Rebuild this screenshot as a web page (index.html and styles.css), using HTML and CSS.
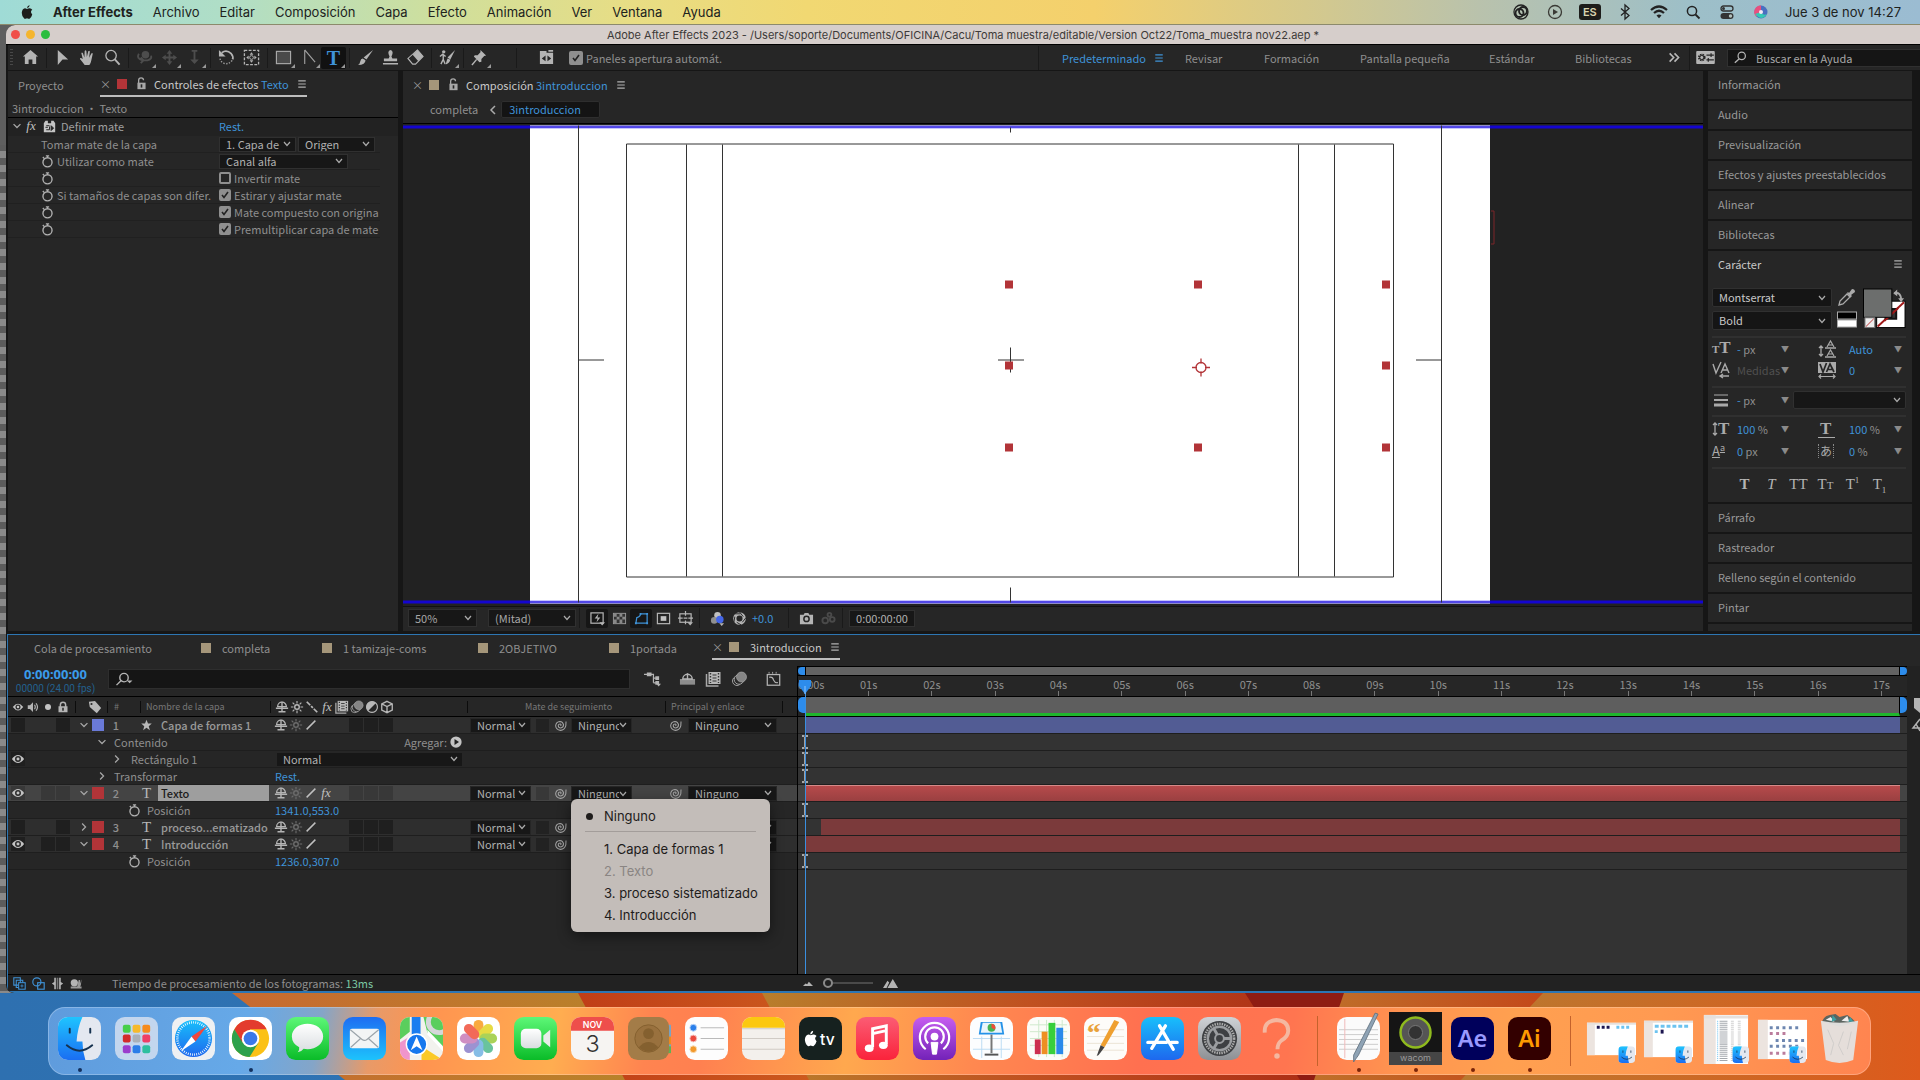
FILE: index.html
```html
<!DOCTYPE html>
<html lang="es">
<head>
<meta charset="utf-8">
<title>Adobe After Effects 2023</title>
<link rel="stylesheet" href="styles.css">
</head>
<body>
<svg class="defs" aria-hidden="true">
  <defs>
    <symbol id="eye" viewBox="0 0 16 16"><path d="M1 8q7-9 14 0q-7 9-14 0z" fill="#c4c4c4"/><circle cx="8" cy="8" r="3.4" fill="#2a2a2a"/><circle cx="8" cy="8" r="1.7" fill="#c4c4c4"/></symbol>
    <symbol id="audio" viewBox="0 0 16 16"><path d="M1 5.500h3l4-4v13l-4-4h-3z" fill="#b4b4b4"/><path d="M10 5q2 3 0 6M12 3q4 5 0 10" fill="none" stroke="#b4b4b4" stroke-width="1.600"/></symbol>
    <symbol id="lock" viewBox="0 0 16 16"><path d="M4.500 8v-3a3.500 3.500 0 0 1 7 0v3" fill="none" stroke="#b4b4b4" stroke-width="2"/><rect x="2" y="7" width="12" height="8" fill="#b4b4b4"/><rect x="7" y="9" width="2" height="4" fill="#262626"/></symbol>
    <symbol id="unlock" viewBox="0 0 16 16"><path d="M4.500 8v-4a3 3 0 0 1 6 0" fill="none" stroke="#a8a8a8" stroke-width="1.600"/><rect x="3" y="7" width="10" height="8" fill="#a8a8a8"/><rect x="7" y="9" width="2" height="4" fill="#262626"/></symbol>
    <symbol id="tag" viewBox="0 0 16 16"><path d="M1 2l7-1l7 8l-5 6l-8-7z" fill="#b8b8b8"/><circle cx="4" cy="4.500" r="1.200" fill="#262626"/></symbol>
    <symbol id="shy" viewBox="0 0 16 16"><path d="M3 7.500a5 5 0 0 1 10 0z" fill="none" stroke="#b4b4b4" stroke-width="1.500"/><path d="M8 2v12M1 9.500h14M4 13.500h8" stroke="#b4b4b4" stroke-width="1.600"/></symbol>
    <symbol id="sun" viewBox="0 0 16 16"><circle cx="8" cy="8" r="2.600" fill="none" stroke="currentColor" stroke-width="1.600"/><path d="M8 1v3M8 12v3M1 8h3M12 8h3M3 3l2 2M11 11l2 2M13 3l-2 2M5 11l-2 2" stroke="currentColor" stroke-width="1.300"/></symbol>
    <symbol id="slash" viewBox="0 0 16 16"><path d="M3 13l10-10" stroke="#c0c0c0" stroke-width="1.700"/></symbol>
    <symbol id="backslash" viewBox="0 0 16 16"><path d="M2 2l4 4M7 7l2 2M10 10l4 4" stroke="#b8b8b8" stroke-width="2"/></symbol>
    <symbol id="film" viewBox="0 0 16 16"><path d="M1 3v12h12" fill="none" stroke="#a8a8a8" stroke-width="1.500"/><rect x="3" y="1" width="12" height="12" fill="#b8b8b8"/><path d="M5 2v10M13 2v10" stroke="#333" stroke-dasharray="1.500 1.500" stroke-width="1.400"/><path d="M7 4h4M7 7h4M7 10h4" stroke="#333"/></symbol>
    <symbol id="blur" viewBox="0 0 16 16"><circle cx="5.500" cy="10" r="4.500" fill="none" stroke="#a0a0a0"/><circle cx="7.500" cy="8.500" r="4.800" fill="#2a2a2a" stroke="#a0a0a0"/><circle cx="10" cy="6" r="5" fill="#858585" stroke="#b0b0b0" stroke-width=".600"/></symbol>
    <symbol id="half" viewBox="0 0 16 16"><circle cx="8" cy="8" r="6.500" fill="#b8b8b8"/><path d="M12.600 3.400a6.500 6.500 0 0 1-9.200 9.200z" fill="#262626"/><circle cx="8" cy="8" r="6.200" fill="none" stroke="#b8b8b8" stroke-width="1.300"/></symbol>
    <symbol id="cube" viewBox="0 0 16 16"><path d="M8 1.500l6 3v7l-6 3l-6-3v-7zM2 4.500l6 3l6-3M8 7.500v7" fill="none" stroke="#b8b8b8" stroke-width="1.500"/></symbol>
    <symbol id="watch" viewBox="0 0 16 16"><circle cx="8" cy="9" r="5.600" fill="none" stroke="#b0b0b0" stroke-width="1.700"/><path d="M6 1h4M8 1v2.500M2.200 2.500l2 2" stroke="#b0b0b0" stroke-width="1.600"/></symbol>
    <symbol id="down" viewBox="0 0 16 16"><path d="M2.500 5l5.500 5.500l5.500-5.500" fill="none" stroke="#a8a8a8" stroke-width="2"/></symbol>
    <symbol id="right" viewBox="0 0 16 16"><path d="M5 2.500l5.500 5.500l-5.500 5.500" fill="none" stroke="#a8a8a8" stroke-width="2"/></symbol>
    <symbol id="whip" viewBox="0 0 16 16"><path d="M8 8.500q1.500-1.500 0-2.200q-2.600-.3-2.800 2q.3 2.800 3.200 2.700q3.400-.6 3.300-4q-.8-3.700-4.400-4q-4.600.4-5.300 5.300q.5 5 6 5.700q5-.3 6.500-5.500l.3-5.500" fill="none" stroke="#a4a4a4" stroke-width="1.300"/></symbol>
    <symbol id="ham" viewBox="0 0 16 16"><path d="M2 3h12M2 8h12M2 13h12" stroke="currentColor" stroke-width="1.800"/></symbol>
    <symbol id="glass" viewBox="0 0 16 16"><circle cx="9.500" cy="6" r="4.500" fill="none" stroke="currentColor" stroke-width="1.500"/><path d="M6.500 9.500l-5.500 5" stroke="currentColor" stroke-width="1.700"/></symbol>
    <symbol id="star" viewBox="0 0 16 16"><path d="M8 1l2 5h5l-4 3.500l1.500 5.500l-4.500-3.200l-4.500 3.200l1.500-5.500l-4-3.500h5z" fill="#b8b8b8"/></symbol>
    <symbol id="beam" viewBox="0 0 10 16"><path d="M2 2h2.500M8 2h-2.500M5 3v10M2 14h2.500M8 14h-2.500" stroke="#d0d0d0" stroke-width="1.400" fill="none"/></symbol>
    <symbol id="finder" viewBox="0 0 44 44"><rect width="44" height="44" rx="10" fill="#e4e8f0"/><path d="M10 0h15q-5 11-6 25h6q0 9 3 19h-18a10 10 0 0 1-10-10v-24a10 10 0 0 1 10-10z" fill="url(#gFind)"/><path d="M12 12v4M33 12v4" stroke="#16324f" stroke-width="2" stroke-linecap="round"/><path d="M9 29q13 11 26 0" fill="none" stroke="#16324f" stroke-width="2" stroke-linecap="round"/></symbol>
    <linearGradient id="gFind" x1="0" y1="0" x2="0" y2="1"><stop offset="0" stop-color="#1fc4ff"/><stop offset="1" stop-color="#1a6ef2"/></linearGradient>
    <linearGradient id="gGreen" x1="0" y1="0" x2="0" y2="1"><stop offset="0" stop-color="#5df777"/><stop offset="1" stop-color="#0abc28"/></linearGradient>
    <linearGradient id="gBlue" x1="0" y1="0" x2="0" y2="1"><stop offset="0" stop-color="#1e6df2"/><stop offset="1" stop-color="#1dc3fc"/></linearGradient>
    <linearGradient id="gStore" x1="0" y1="0" x2="0" y2="1"><stop offset="0" stop-color="#18bffb"/><stop offset="1" stop-color="#1e68ee"/></linearGradient>
    <linearGradient id="gMusic" x1="0" y1="0" x2="0" y2="1"><stop offset="0" stop-color="#fb5c74"/><stop offset="1" stop-color="#fa233b"/></linearGradient>
    <linearGradient id="gPod" x1="0" y1="0" x2="0" y2="1"><stop offset="0" stop-color="#c65df0"/><stop offset="1" stop-color="#7322b8"/></linearGradient>
    <linearGradient id="gGrey" x1="0" y1="0" x2="0" y2="1"><stop offset="0" stop-color="#cfd2d6"/><stop offset="1" stop-color="#8d9094"/></linearGradient>
    <linearGradient id="gWhite" x1="0" y1="0" x2="0" y2="1"><stop offset="0" stop-color="#ffffff"/><stop offset="1" stop-color="#d9dde0"/></linearGradient>
  </defs>
</svg>

<header class="menubar">
  <nav class="menus" aria-label="Menú">
    <button class="apple" aria-label="Apple"><svg viewBox="0 0 16 16"><path d="M11 0q0 3-3 3.800q0-3 3-3.800zM8 4.600q1.200-.8 3-.8q2 .2 3 1.700q-3 2.300 0 5.300q-.8 3-3 5q-1.300.2-3-.7q-1.700.9-3 .7q-3-2.600-3-7q.5-4.500 3.700-5q1 0 2.300.8z" fill="#1d1d1b"/></svg></button>
    <button class="strong">After Effects</button><button>Archivo</button><button>Editar</button><button>Composición</button><button>Capa</button><button>Efecto</button><button>Animación</button><button>Ver</button><button>Ventana</button><button>Ayuda</button>
  </nav>
  <div class="status">
    <svg viewBox="0 0 20 16"><circle cx="10" cy="8" r="7" fill="none" stroke="#222" stroke-width="1.300"/><circle cx="8.500" cy="9" r="4" fill="none" stroke="#222" stroke-width="1.800"/><circle cx="12" cy="7" r="4" fill="none" stroke="#222" stroke-width="1.800"/></svg>
    <svg viewBox="0 0 20 16"><circle cx="10" cy="8" r="6.500" fill="none" stroke="#3a3a35" stroke-width="1.300"/><path d="M8 5l5 3l-5 3z" fill="#3a3a35"/></svg>
    <span class="lang">ES</span>
    <svg viewBox="0 0 20 16"><path d="M6 4.500l8 7l-4 3.500v-14l4 3.500l-8 7" fill="none" stroke="#222" stroke-width="1.300"/></svg>
    <svg viewBox="0 0 20 16"><path d="M2 6q8-7 16 0M5 9q5-4.500 10 0" fill="none" stroke="#222" stroke-width="2.200"/><path d="M7.500 11.500q2.500-2 5 0l-2.500 2.800z" fill="#222"/></svg>
    <svg viewBox="0 0 20 16"><circle cx="9" cy="7" r="4.600" fill="none" stroke="#222" stroke-width="1.500"/><path d="M12.500 10.500l4 4" stroke="#222" stroke-width="1.800"/></svg>
    <svg viewBox="0 0 20 16"><rect x="4" y="2" width="12" height="5" rx="2.500" fill="none" stroke="#333" stroke-width="1.300"/><circle cx="6.500" cy="4.500" r="1.500" fill="#333"/><rect x="3.500" y="9" width="13" height="6" rx="3" fill="#333"/><circle cx="13.500" cy="12" r="1.700" fill="#b3c1bd"/></svg>
    <svg viewBox="0 0 20 16"><circle cx="10" cy="8" r="6.500" fill="#4a6fc0"/><path d="M10 1.500a6.500 6.500 0 0 0-5 11q5-2 5-5z" fill="#e8507f"/><path d="M4 10q7 8 12 0q-4 2-6-2z" fill="#34c8b4"/><circle cx="10" cy="8" r="2" fill="#f3e9f5"/></svg>
    <time class="clock">Jue 3 de nov 14:27</time>
  </div>
</header>

<main class="stage">
<div class="window">
  <div class="titlebar">
    <div class="lights"><i class="red"></i><i class="amber"></i><i class="green"></i></div>
    <h1>Adobe After Effects 2023 - /Users/soporte/Documents/OFICINA/Cacu/Toma muestra/editable/Version Oct22/Toma_muestra nov22.aep *</h1>
  </div>

  <div class="toolbar">
    <i class="grip"></i>
    <button class="tool" aria-label="Inicio"><svg viewBox="0 0 18 18"><path d="M9 1l8 7h-2v8h-4v-5h-4v5h-4v-8h-2z" fill="#b4b4b4"/></svg></button>
    <i class="sep"></i>
    <button class="tool" aria-label="Selección"><svg viewBox="0 0 18 18"><path d="M4 1l11 10h-6l-5 6z" fill="#b4b4b4"/></svg></button>
    <button class="tool" aria-label="Mano"><svg viewBox="0 0 18 18"><path d="M6 17q-2-3-5-6.500q0-2 3 0l-1.500-6q.5-1.500 1.700 0l1.500 4.500l.3-7q1-1.500 1.800 0l.5 6.500l1.500-6q1-1.300 1.700.2l-.8 6.500l2.300-4.500q1.500-1 1.500.5l-1.500 7q-.5 3-2 4.800z" fill="#b4b4b4"/></svg></button>
    <button class="tool" aria-label="Zoom"><svg viewBox="0 0 18 18"><circle cx="7.500" cy="7" r="5.500" fill="none" stroke="#b4b4b4" stroke-width="1.400"/><path d="M11.500 11l5 5.500" stroke="#b4b4b4" stroke-width="2"/></svg></button>
    <i class="sep"></i>
    <button class="tool more dim" aria-label="Órbita"><svg viewBox="0 0 18 18"><circle cx="10" cy="6" r="4" fill="#4d4d4d"/><path d="M3 5q-3 5 4 7h5q5-1 4-5M5 9l3 3l-3 3" fill="none" stroke="#4d4d4d" stroke-width="2"/></svg></button>
    <button class="tool more dim" aria-label="Desplazar"><svg viewBox="0 0 18 18"><path d="M9 1l3 4h-6zM9 17l3-4h-6zM1 9l4-3v6zM17 9l-4-3v6z" fill="#4d4d4d"/><path d="M9 4v10M4 9h10" stroke="#4d4d4d" stroke-width="2"/></svg></button>
    <button class="tool more dim" aria-label="Dolly"><svg viewBox="0 0 18 18"><path d="M6 2h6M9 2v12" stroke="#4d4d4d" stroke-width="2"/><path d="M4.500 11h9l-4.500 5z" fill="#4d4d4d"/></svg></button>
    <i class="sep"></i>
    <button class="tool" aria-label="Rotación"><svg viewBox="0 0 18 18"><path d="M4 4q5-4 10 1q2.500 3 1.500 6" fill="none" stroke="#b4b4b4" stroke-width="1.900"/><path d="M15 12q-4 5-9 3q-4-2-4-6" fill="none" stroke="#999" stroke-width="1.500" stroke-dasharray="1.500 1.500"/><path d="M1 1v7h7z" fill="#b4b4b4"/></svg></button>
    <button class="tool" aria-label="Panorámica trasera"><svg viewBox="0 0 18 18"><rect x="1.500" y="1.500" width="15" height="15" fill="none" stroke="#b4b4b4" stroke-width="1.400" stroke-dasharray="3 1.500"/><path d="M9 3.500l2 2.500h-4zM9 14.500l2-2.500h-4zM3.500 9l2.500-2v4zM14.500 9l-2.500-2v4z" fill="#b4b4b4"/><circle cx="9" cy="9" r="2" fill="none" stroke="#b4b4b4"/></svg></button>
    <i class="sep"></i>
    <button class="tool more" aria-label="Rectángulo"><svg viewBox="0 0 18 18"><rect x="1.500" y="2.500" width="15" height="13" fill="#4a4a4a" stroke="#aaa" stroke-width="1.200"/></svg></button>
    <button class="tool more" aria-label="Pluma"><svg viewBox="0 0 18 18"><path d="M5 1v15M5 1l11 13" stroke="#a0a0a0" fill="none" stroke-width="1.200"/></svg></button>
    <button class="tool more on" aria-label="Texto">T</button>
    <i class="sep"></i>
    <button class="tool" aria-label="Pincel"><svg viewBox="0 0 18 18"><path d="M17 1l-7 10l-3-2z" fill="#b4b4b4"/><path d="M6 10l3 2q0 5-8 5q2-1 2.500-4q.5-3 2.500-3z" fill="#b4b4b4"/></svg></button>
    <button class="tool" aria-label="Tampón"><svg viewBox="0 0 18 18"><path d="M8 8q-3-6 1-7q4 1 1 7l1 2h5v3h-14v-3h5z" fill="#b4b4b4"/><path d="M1 15.500h16" stroke="#b4b4b4" stroke-width="1.600"/></svg></button>
    <button class="tool" aria-label="Borrador"><svg viewBox="0 0 18 18"><path d="M11 1l6 7l-8 8h-3l-5-6z" fill="none" stroke="#b4b4b4" stroke-width="1.200"/><path d="M11 1l6 7l-5 5l-6-7z" fill="#b4b4b4"/></svg></button>
    <i class="sep"></i>
    <button class="tool more" aria-label="Rotoscopio"><svg viewBox="0 0 18 18"><circle cx="5" cy="3" r="1.800" fill="#b4b4b4"/><path d="M1 8l3-2.500l3 2.500M4.500 6v5l-2.500 5M4.500 11l2 5" stroke="#b4b4b4" stroke-width="1.500" fill="none"/><path d="M17 1l-5 10l-3-2zM9 10l3 1.500q-1 4-5 5q1-4 2-6.500z" fill="#b4b4b4"/></svg></button>
    <i class="sep"></i>
    <button class="tool more" aria-label="Posición libre"><svg viewBox="0 0 18 18"><path d="M10 1l6 6l-2 .500l-3 3l0 3l-2 .500l-6-6l1-1.500l3 0l3-3z" fill="#b4b4b4"/><path d="M6 11l-5 6" stroke="#b4b4b4" stroke-width="1.500"/></svg></button>
    <i class="sep wide"></i>
    <button class="tool" aria-label="Paneles"><svg viewBox="0 0 18 18"><path d="M2 2h7v2h7v12h-14z" fill="#b4b4b4"/><path d="M11 1h5v2h-5z" fill="#b4b4b4"/><path d="M8 7v6l-4-3zM10 7v6l4-3z" fill="#262626"/></svg></button>
    <label class="auto"><input type="checkbox" class="tick big" checked>Paneles apertura automát.</label>
    <nav class="spaces" aria-label="Espacios de trabajo">
      <button class="w1">Predeterminado <svg><use href="#ham"/></svg></button><button class="w2">Revisar</button><button class="w3">Formación</button><button class="w4">Pantalla pequeña</button><button class="w5">Estándar</button><button class="w6">Bibliotecas</button><button class="chev" aria-label="Más"><svg viewBox="0 0 16 16"><path d="M2 3l5 5l-5 5M8 3l5 5l-5 5" fill="none" stroke="#b8b8b8" stroke-width="2"/></svg></button>
    </nav>
    <button class="sync" aria-label="Ajustes"><svg viewBox="0 0 20 14"><rect width="20" height="14" rx="1" fill="#b4b4b4"/><circle cx="6" cy="7" r="3" fill="none" stroke="#262626" stroke-width="2.200" stroke-dasharray="1.600 .800"/><circle cx="6" cy="7" r="2.200" fill="none" stroke="#262626"/><path d="M11 4.500h8M11 9.500h8M16 2.500v4M13 7.500v4" stroke="#262626" stroke-width="1.300"/></svg></button>
    <label class="help"><svg><use href="#glass"/></svg><input type="search" aria-label="Buscar en la Ayuda" placeholder="Buscar en la Ayuda"></label>
  </div>

  <div class="upper">
    <section class="panel effects">
      <div class="tabs">
        <button class="tab project">Proyecto</button>
        <div class="tab active"><b class="x">×</b><i class="chip r"></i><svg class="s12 lockgap"><use href="#unlock"/></svg><span>Controles de efectos <em>Texto</em></span><svg class="s10 hamgap"><use href="#ham"/></svg></div>
      </div>
      <p class="source">3introduccion · Texto</p>
      <div class="fxhead"><svg class="s10"><use href="#down"/></svg><em class="fx">fx</em><svg class="s12" viewBox="0 0 16 16"><path d="M1 4l2-3h3v3h4v-3h3l2 3v11h-14z" fill="#c4c4c4"/><path d="M4 7h4M4 12h4M8 8v4M3 9h3M10 7l3 3l-3 3z" stroke="#262626" stroke-width="1.200" fill="#262626"/></svg><span class="name">Definir mate</span><a href="#">Rest.</a></div>
      <div class="param"><i></i><label class="lab flush" for="p1">Tomar mate de la capa</label><select id="p1" class="dd w77"><option>1. Capa de formas 1</option></select><select class="dd w77" aria-label="Origen"><option>Origen</option></select></div>
      <div class="param"><svg class="s12"><use href="#watch"/></svg><label class="lab" for="p2">Utilizar como mate</label><select id="p2" class="dd w129"><option>Canal alfa</option></select></div>
      <div class="param"><svg class="s12"><use href="#watch"/></svg><span class="lab"></span><label class="ck"><input type="checkbox" class="tick">Invertir mate</label></div>
      <div class="param"><svg class="s12"><use href="#watch"/></svg><span class="lab">Si tamaños de capas son difer.</span><label class="ck"><input type="checkbox" class="tick" checked>Estirar y ajustar mate</label></div>
      <div class="param"><svg class="s12"><use href="#watch"/></svg><span class="lab"></span><label class="ck"><input type="checkbox" class="tick" checked>Mate compuesto con origina</label></div>
      <div class="param"><svg class="s12"><use href="#watch"/></svg><span class="lab"></span><label class="ck"><input type="checkbox" class="tick" checked>Premultiplicar capa de mate</label></div>
    </section>

    <section class="panel comp">
      <div class="tabs">
        <div class="tab plain"><b class="x">×</b><i class="chip t"></i><svg class="s12 lockgap"><use href="#unlock"/></svg><span>Composición <em>3introduccion</em></span><svg class="s10 hamgap"><use href="#ham"/></svg></div>
      </div>
      <div class="crumbs"><button>completa</button><svg viewBox="0 0 8 10"><path d="M6 1l-4 4l4 4" fill="none" stroke="#aaa" stroke-width="1.500"/></svg><button class="cur">3introduccion</button></div>
      <div class="viewer">
        <svg class="canvas" viewBox="403 124 1300 481" preserveAspectRatio="xMidYMid meet">
          <rect x="530" y="125" width="960" height="478" fill="#fff"/>
          <path d="M0 126.500h530M1490 126.500h2000M0 601.500h530M1490 601.500h2000" stroke="#1405cf" stroke-width="3"/>
          <path d="M530 126.500h960M530 601.500h960" stroke="#8f8aff" stroke-width="3"/>
          <path d="M530 126.500h960M530 601.500h960" stroke="#1405cf" stroke-width="1"/>
          <path d="M578.500 125v477M1441.500 125v477M626.500 143.500h767v433h-767zM686.500 144v432M722.500 144v432M1298.500 144v432M1334.500 144v432M1010.500 127v5M1010.500 587v15M1010.500 347v25M998 359.500h26M579 359.500h25M1416 359.500h25" fill="none" stroke="#333"/>
          <path d="M1005 280h8v8h-8zM1194 280h8v8h-8zM1382 280h8v8h-8zM1005 361h8v8h-8zM1382 361h8v8h-8zM1005 443h8v8h-8zM1194 443h8v8h-8zM1382 443h8v8h-8z" fill="#b23438"/>
          <circle cx="1201" cy="367" r="5" fill="none" stroke="#b23438" stroke-width="1.300"/><path d="M1201 358v5M1201 371v5M1192 367h5M1205 367h5" stroke="#b23438" stroke-width="1.300"/>
          <path d="M1491 210.500h3v33h-3" fill="none" stroke="#7d2528"/>
        </svg>
      </div>
      <div class="viewbar">
        <select class="dd w69" aria-label="Aumento"><option>50%</option></select>
        <select class="dd w88" aria-label="Resolución"><option>(Mitad)</option></select>
        <i class="sep"></i>
        <button class="vb on" aria-label="Vista rápida"><svg viewBox="0 0 16 16"><rect x="1" y="2" width="13" height="11" fill="none" stroke="#b4b4b4" stroke-width="1.300"/><path d="M9 3l-4 5h3l-1 4l4-5h-3z" fill="#b4b4b4"/><path d="M10 12h6l-3 3.500z" fill="#b4b4b4"/></svg></button>
        <button class="vb" aria-label="Transparencia"><svg viewBox="0 0 16 16"><rect x="1.500" y="2.500" width="13" height="11" fill="#333" stroke="#999"/><path d="M2 3h3v3h-3zM8 3h3v3h-3zM5 6h3v3h-3zM11 6h3v3h-3zM2 9h3v4h-3zM8 9h3v4h-3z" fill="#888"/></svg></button>
        <button class="vb on" aria-label="Máscara"><svg viewBox="0 0 16 16"><path d="M2 13l1-6q4-1 4-4h7v10z" fill="none" stroke="#3f93d8" stroke-width="1.300"/><path d="M1 12h2v2h-2zM13 2h2v2h-2zM13 12h2v2h-2zM6 2h2v2h-2z" fill="#3f93d8"/></svg></button>
        <button class="vb" aria-label="Región"><svg viewBox="0 0 16 16"><rect x="1.500" y="2.500" width="13" height="11" fill="none" stroke="#b4b4b4" stroke-width="1.300"/><rect x="5" y="5.500" width="6" height="5" fill="#c4c4c4"/></svg></button>
        <button class="vb" aria-label="Guías"><svg viewBox="0 0 16 16"><rect x="2" y="3" width="12" height="9" fill="none" stroke="#b4b4b4" stroke-width="1.300"/><path d="M8 0v5M8 10v4M0 7.500h5M11 7.500h5M6 7.500h4" stroke="#b4b4b4" stroke-width="1.300"/><path d="M10 12h6l-3 3.500z" fill="#b4b4b4"/></svg></button>
        <i class="sep"></i>
        <button class="vb" aria-label="Canales"><svg viewBox="0 0 16 16"><circle cx="8" cy="4.500" r="3.500" fill="#c0c0c0"/><circle cx="4.500" cy="10" r="3.500" fill="#909090"/><circle cx="10.500" cy="9" r="4" fill="#4466e8"/><path d="M10 13h5l-2.500 3z" fill="#b4b4b4"/></svg></button>
        <button class="vb" aria-label="Exposición"><svg viewBox="0 0 16 16"><circle cx="8" cy="8" r="5" fill="none" stroke="#b4b4b4" stroke-width="3.500"/><path d="M8 1l4 5M15 7l-4 5M10 15l-5-3M2 12l1-6M3 3l6 0" stroke="#262626"/></svg></button>
        <a class="expo" href="#">+0.0</a>
        <i class="sep"></i>
        <button class="vb" aria-label="Instantánea"><svg viewBox="0 0 16 16"><path d="M1 4h4l1-2h4l1 2h4v10h-14z" fill="#b4b4b4"/><circle cx="8" cy="8.500" r="2.800" fill="#b4b4b4" stroke="#262626" stroke-width="1.600"/></svg></button>
        <button class="vb" aria-label="Mostrar instantánea"><svg viewBox="0 0 16 16"><circle cx="4.500" cy="10" r="3" fill="none" stroke="#4a4a4a" stroke-width="2"/><circle cx="9" cy="4" r="2" fill="none" stroke="#4a4a4a" stroke-width="2"/><circle cx="12" cy="9" r="2.500" fill="none" stroke="#4a4a4a" stroke-width="2"/></svg></button>
        <i class="sep"></i>
        <button class="time">0:00:00:00</button>
      </div>
    </section>

    <aside class="side">
      <button class="acc">Información</button><button class="acc">Audio</button><button class="acc">Previsualización</button><button class="acc">Efectos y ajustes preestablecidos</button><button class="acc">Alinear</button><button class="acc">Bibliotecas</button>
      <section class="char">
        <h2>Carácter<svg class="s10"><use href="#ham"/></svg></h2>
        <div class="fonts">
          <div class="families"><select class="dd split" aria-label="Familia"><option>Montserrat</option></select><select class="dd split" aria-label="Estilo"><option>Bold</option></select></div>
          <svg class="pipette" viewBox="0 0 20 44"><path d="M2 17l1-4l7-7l3 3l-7 7z" fill="none" stroke="#aaa" stroke-width="1.300"/><path d="M10 5l1-1l1 1l3-4q3 0 3 3l-4 3l1 1l-1.500 1.500z" fill="#aaa"/><rect x=".500" y="24" width="19" height="7" fill="#000" stroke="#aaa"/><rect x=".500" y="32" width="19" height="7" fill="#fff" stroke="#aaa"/></svg>
          <svg class="swatches" viewBox="0 0 44 42"><rect x="14" y="13" width="29" height="27" fill="#fff" stroke="#000"/><path d="M15 39l27-25" stroke="#a01818" stroke-width="2"/><rect x="23" y="21" width="11" height="10" fill="#333" stroke="#111" stroke-width="2"/><path d="M22 33l14-13" stroke="#a01818" stroke-width="2"/><rect x=".500" y=".500" width="29" height="29" fill="#6c6e6d" stroke="#000"/><rect x="2" y="30" width="10" height="10" fill="#eee" stroke="#777"/><path d="M3 39l8-8" stroke="#b33"/><path d="M32 5q7-2 7 7" fill="none" stroke="#aaa" stroke-width="2"/><path d="M31 5l4-4v7zM36 10h6l-3 4z" fill="#aaa"/></svg>
        </div>
        <div class="grid g2 first">
          <span class="ic ttt"><small>T</small>T</span><span><em>-</em> px</span><b>▼</b><svg class="c5" viewBox="0 0 18 18"><path d="M3 6v10M1 8l2-2l2 2M1 14l2 2l2-2M7 8h11M7 17h11" fill="none" stroke="#aaa" stroke-width="1.300"/><path d="M9 7l3.500-6l3.500 6M10 5h5M9 16l3.500-6l3.500 6M10 14h5" fill="none" stroke="#aaa" stroke-width="1.200"/></svg><em class="c7">Auto</em><b>▼</b>
          <svg viewBox="0 0 18 18"><path d="M1 3l3 9l5-11M9 12l4-9l4 9M10 9h6M8 15h9M11 13l-3 2l3 2" fill="none" stroke="#aaa" stroke-width="1.400"/></svg><span class="off">Medidas</span><b>▼</b><svg class="c5" viewBox="0 0 18 18"><rect y="1" width="18" height="11" fill="#aaa"/><path d="M2 3l3 8l3.500-9M8.500 11l3.500-8l4 8M10 8.500h5" fill="none" stroke="#262626" stroke-width="1.700"/><path d="M1 15.500h16M3 13.500l-2 2l2 2M15 13.500l2 2l-2 2" fill="none" stroke="#aaa" stroke-width="1.200"/></svg><em class="c7">0</em><b>▼</b>
        </div>
        <div class="grid g1">
          <svg viewBox="0 0 18 18"><path d="M2 4h14" stroke="#aaa"/><path d="M2 9h14" stroke="#aaa" stroke-width="2"/><path d="M2 14h14" stroke="#aaa" stroke-width="3"/></svg><span><em>-</em> px</span><b>▼</b><select class="dd wide" aria-label="Trazo"><option></option></select>
        </div>
        <div class="grid g2">
          <span class="ic"><svg class="arr" viewBox="0 0 6 16"><path d="M3 2v12M1 4l2-2l2 2M1 12l2 2l2-2" fill="none" stroke="#aaa" stroke-width="1.300"/></svg>T</span><span><em>100</em> %</span><b>▼</b><span class="ic c5 under">T</span><span class="c7"><em>100</em> %</span><b>▼</b>
          <span class="ic base">A<sup>a</sup></span><span><em>0</em> px</span><b>▼</b><span class="ic c5 jp">あ</span><span class="c7"><em>0</em> %</span><b>▼</b>
        </div>
        <div class="styles"><button class="heavy">T</button><button class="ital">T</button><button>TT</button><button>T<small>T</small></button><button>T<sup>1</sup></button><button>T<sub>1</sub></button></div>
      </section>
      <button class="acc">Párrafo</button><button class="acc">Rastreador</button><button class="acc">Relleno según el contenido</button><button class="acc">Pintar</button><i class="rest"></i>
    </aside>
  </div>

  <section class="timeline">
    <div class="ttabs">
      <button class="q">Cola de procesamiento</button>
      <button class="k2"><i class="chip t"></i>completa</button>
      <button class="k3"><i class="chip t"></i>1 tamizaje-coms</button>
      <button class="k4"><i class="chip t"></i>2OBJETIVO</button>
      <button class="k5"><i class="chip t"></i>1portada</button>
      <div class="tab active k6"><b class="x">×</b><i class="chip t"></i><span>3introduccion</span><svg class="s10 hamgap"><use href="#ham"/></svg></div>
    </div>
    <div class="tbody">
      <div class="layers">
        <div class="thead">
          <div class="tc"><strong>0:00:00:00</strong><span>00000 (24.00 fps)</span></div>
          <label class="find"><svg viewBox="0 0 18 16"><circle cx="9" cy="6" r="4.500" fill="none" stroke="#b4b4b4" stroke-width="1.500"/><path d="M6 9l-5 5" stroke="#b4b4b4" stroke-width="1.500"/><path d="M12 9h6l-3 3z" fill="#b4b4b4"/></svg><input type="search" aria-label="Buscar"></label>
          <div class="tbtns">
            <button class="b1" aria-label="Minigráfico"><svg viewBox="0 0 18 16"><path d="M0 3h5M5 3h5v9M10 7h4M10 12h4" stroke="#b4b4b4" fill="none" stroke-width="1.300"/><path d="M3 1h5v4h-5zM12 5h4v4h-4zM12 10h4v4h-4zM13 13h5l-2.500 3z" fill="#b4b4b4"/></svg></button>
            <button class="b2" aria-label="Tímidas"><svg viewBox="0 0 18 16"><path d="M4 8a5 5 0 0 1 10 0z" fill="none" stroke="#b4b4b4" stroke-width="1.500"/><path d="M9 2v7M1 9h16" stroke="#b4b4b4" stroke-width="1.500"/><path d="M1 10h16v4h-16z" fill="#8c8c8c"/></svg></button>
            <button class="b3" aria-label="Fusión"><svg><use href="#film"/></svg></button>
            <button class="b4" aria-label="Desenfoque"><svg><use href="#blur"/></svg></button>
            <button class="b5" aria-label="Editor de gráficos"><svg viewBox="0 0 18 18"><rect x="2" y="4" width="14" height="12" fill="none" stroke="#b4b4b4" stroke-width="1.400"/><path d="M4 7q4-1 5 3q2 4 5 3" fill="none" stroke="#b4b4b4" stroke-width="1.300"/><path d="M4 1v2M8 1v2M12 1v2" stroke="#b4b4b4"/></svg></button>
          </div>
        </div>
        <div class="cols">
          <div class="av"><svg><use href="#eye"/></svg><svg><use href="#audio"/></svg><svg viewBox="0 0 16 16"><circle cx="8" cy="8" r="4" fill="#c4c4c4"/></svg><svg><use href="#lock"/></svg></div>
          <i class="bar"></i><svg class="tagc"><use href="#tag"/></svg><i class="bar"></i><span class="hash">#</span><i class="bar"></i><span class="hname">Nombre de la capa</span><i class="bar"></i>
          <div class="sws bright"><svg><use href="#shy"/></svg><svg><use href="#sun"/></svg><svg><use href="#backslash"/></svg><em class="fx">fx</em><svg><use href="#film"/></svg><svg><use href="#blur"/></svg><svg><use href="#half"/></svg><svg><use href="#cube"/></svg></div>
          <i class="bar far"></i><span class="hmate">Mate de seguimiento</span><i class="bar"></i><span class="hpar">Principal y enlace</span><i class="bar"></i>
        </div>

        <div class="row layer">
          <div class="av"><i></i><i class="no"></i><i class="no"></i><i></i></div><svg class="tw"><use href="#down"/></svg><i class="sw blue"></i><span class="num">1</span><svg class="ty"><use href="#star"/></svg><span class="name">Capa de formas 1</span>
          <div class="sws"><svg><use href="#shy"/></svg><svg><use href="#sun"/></svg><svg><use href="#slash"/></svg><i class="no"></i><i class="no"></i><i></i><i></i><i></i></div>
          <select class="dd mode" aria-label="Modo"><option>Normal</option></select><i class="pt"></i><svg class="wh"><use href="#whip"/></svg><select class="dd matte" aria-label="Mate"><option>Ninguno</option></select><svg class="wh2"><use href="#whip"/></svg><select class="dd parent" aria-label="Principal"><option>Ninguno</option></select>
        </div>
        <div class="row prop"><svg class="tw in1"><use href="#down"/></svg><span>Contenido</span><span class="agregar">Agregar: <svg viewBox="0 0 16 16"><circle cx="8" cy="8" r="7.500" fill="#c4c4c4"/><path d="M6 4l6 4l-6 4z" fill="#222"/></svg></span></div>
        <div class="row prop"><div class="av"><i><svg><use href="#eye"/></svg></i></div><svg class="tw in2"><use href="#right"/></svg><span class="rect">Rectángulo 1</span><select class="dd blend" aria-label="Modo del grupo"><option>Normal</option></select></div>
        <div class="row prop"><svg class="tw in1"><use href="#right"/></svg><span class="trans">Transformar</span><a href="#">Rest.</a></div>
        <div class="row layer sel">
          <div class="av"><i><svg><use href="#eye"/></svg></i><i class="no"></i><i></i><i></i></div><svg class="tw"><use href="#down"/></svg><i class="sw red"></i><span class="num">2</span><span class="ty">T</span><span class="name">Texto</span>
          <div class="sws"><svg><use href="#shy"/></svg><svg><use href="#sun"/></svg><svg><use href="#slash"/></svg><em class="fx">fx</em><i class="no"></i><i></i><i></i><i></i></div>
          <select class="dd mode" aria-label="Modo"><option>Normal</option></select><i class="pt"></i><svg class="wh"><use href="#whip"/></svg>
          <div class="anchor"><select class="dd matte" aria-label="Mate"><option>Ninguno</option></select>
            <ul class="popup" role="menu"><li role="menuitemradio" aria-checked="true" class="chosen">Ninguno</li><li role="separator" class="rule"></li><li role="menuitemradio">1. Capa de formas 1</li><li role="menuitemradio" class="off">2. Texto</li><li role="menuitemradio">3. proceso sistematizado</li><li role="menuitemradio">4. Introducción</li></ul>
          </div>
          <svg class="wh2"><use href="#whip"/></svg><select class="dd parent" aria-label="Principal"><option>Ninguno</option></select>
        </div>
        <div class="row prop"><svg class="tw pos"><use href="#watch"/></svg><span class="posn">Posición</span><a href="#">1341.0,553.0</a></div>
        <div class="row layer">
          <div class="av"><i></i><i class="no"></i><i class="no"></i><i></i></div><svg class="tw"><use href="#right"/></svg><i class="sw red"></i><span class="num">3</span><span class="ty">T</span><span class="name">proceso...ematizado</span>
          <div class="sws"><svg><use href="#shy"/></svg><svg><use href="#sun"/></svg><svg><use href="#slash"/></svg><i class="no"></i><i class="no"></i><i></i><i></i><i></i></div>
          <select class="dd mode" aria-label="Modo"><option>Normal</option></select><i class="pt"></i><svg class="wh"><use href="#whip"/></svg><select class="dd matte" aria-label="Mate"><option>Ninguno</option></select><svg class="wh2"><use href="#whip"/></svg><select class="dd parent" aria-label="Principal"><option>Ninguno</option></select>
        </div>
        <div class="row layer">
          <div class="av"><i><svg><use href="#eye"/></svg></i><i class="no"></i><i></i><i></i></div><svg class="tw"><use href="#down"/></svg><i class="sw red"></i><span class="num">4</span><span class="ty">T</span><span class="name">Introducción</span>
          <div class="sws"><svg><use href="#shy"/></svg><svg><use href="#sun"/></svg><svg><use href="#slash"/></svg><i class="no"></i><i class="no"></i><i></i><i></i><i></i></div>
          <select class="dd mode" aria-label="Modo"><option>Normal</option></select><i class="pt"></i><svg class="wh"><use href="#whip"/></svg><select class="dd matte" aria-label="Mate"><option>Ninguno</option></select><svg class="wh2"><use href="#whip"/></svg><select class="dd parent" aria-label="Principal"><option>Ninguno</option></select>
        </div>
        <div class="row prop"><svg class="tw pos"><use href="#watch"/></svg><span class="posn">Posición</span><a href="#">1236.0,307.0</a></div>
      </div>

      <div class="tracks">
        <div class="range nav"><i></i><b></b><i></i></div>
        <div class="ruler"><span class="zero">0:00s</span><span>01s</span><span>02s</span><span>03s</span><span>04s</span><span>05s</span><span>06s</span><span>07s</span><span>08s</span><span>09s</span><span>10s</span><span>11s</span><span>12s</span><span>13s</span><span>14s</span><span>15s</span><span>16s</span><span>17s</span></div>
        <div class="range work"><i></i><b></b><i></i></div>
        <div class="lanes">
          <div class="lane"><i class="clip blue"></i></div>
          <div class="lane"><svg><use href="#beam"/></svg></div>
          <div class="lane"><svg><use href="#beam"/></svg></div>
          <div class="lane"><svg><use href="#beam"/></svg></div>
          <div class="lane sel"><i class="clip hot"></i></div>
          <div class="lane"><svg><use href="#beam"/></svg></div>
          <div class="lane"><i class="clip late"></i></div>
          <div class="lane"><i class="clip"></i></div>
          <div class="lane"><svg><use href="#beam"/></svg></div>
        </div>
        <i class="needle"></i>
        <svg class="head" viewBox="0 0 12 14"><path d="M0 0h12v6l-6 8l-6-8z" fill="#2d8ceb"/><path d="M6 6v8" stroke="#8cc4ff"/></svg>
      </div>
      <svg class="marks" viewBox="0 0 8 36"><path d="M2 1h6v15l-6-5z" fill="#b4b4b4"/><path d="M8 22l-7 9h7M4 27l4 7" fill="none" stroke="#b4b4b4" stroke-width="1.500"/></svg>
    </div>
    <div class="foot">
      <div class="ficons">
        <svg viewBox="0 0 16 16"><path d="M1 1h8v9h-8zM4 4h8v9h-8z" fill="none" stroke="#3f93d8" stroke-width="1.300"/><rect x="7" y="7" width="8" height="8" fill="#1c1c1c" stroke="#3f93d8" stroke-width="1.300"/><path d="M11 9v4M9 11h4" stroke="#3f93d8"/></svg>
        <svg viewBox="0 0 16 16"><circle cx="6" cy="6" r="5" fill="none" stroke="#3f93d8" stroke-width="1.400"/><rect x="7" y="7" width="8" height="8" fill="none" stroke="#3f93d8" stroke-width="1.400"/></svg>
        <svg viewBox="0 0 16 16"><path d="M6 1v14h-2v-5l-3-2l3-2v-5zM10 1v14h2v-5l3-2l-3-2v-5z" fill="#b4b4b4"/><path d="M7 1h2v14h-2z" fill="#777"/></svg>
        <svg viewBox="0 0 18 16"><circle cx="6" cy="7" r="5" fill="#b4b4b4"/><path d="M1 12h15v3h-15zM12 3h2v9h-4zM16 2l-1 9h-2z" fill="#999"/></svg>
      </div>
      <span class="cost">Tiempo de procesamiento de los fotogramas: <b>13ms</b></span>
      <div class="zoomer"><svg viewBox="0 0 12 8"><path d="M0 7l3-3l2 1l2-3l5 5z" fill="#b4b4b4"/></svg><input type="range" min="0" max="100" value="0" aria-label="Zoom de tiempo"><svg class="mt" viewBox="0 0 18 10"><path d="M0 10l5-8l2 2l-3 6zM5 10l6-10l6 10z" fill="#b4b4b4"/></svg></div>
    </div>
  </section>
</div>
</main>

<footer class="desk">
  <svg class="wall" viewBox="0 0 1920 87" preserveAspectRatio="none">
    <defs>
      <linearGradient id="w1" x1="0" x2="1"><stop offset="0" stop-color="#2e70b0"/><stop offset="1" stop-color="#2f80c4"/></linearGradient>
      <linearGradient id="w2" x1="0" x2="1"><stop offset="0" stop-color="#c86a30"/><stop offset="1" stop-color="#b8822a"/></linearGradient>
      <linearGradient id="w3" x1="0" x2="1"><stop offset="0" stop-color="#c03e17"/><stop offset="1" stop-color="#cc5a1e"/></linearGradient>
      <linearGradient id="w4" x1="0" x2="1"><stop offset="0" stop-color="#b87e2c"/><stop offset=".500" stop-color="#c05020"/><stop offset="1" stop-color="#ad3016"/></linearGradient>
      <linearGradient id="w5" x1="0" x2="1"><stop offset="0" stop-color="#bf702a"/><stop offset="1" stop-color="#c4481a"/></linearGradient>
      <linearGradient id="w6" x1="0" x2="1"><stop offset="0" stop-color="#b87a30"/><stop offset="1" stop-color="#dd5a1c"/></linearGradient>
    </defs>
    <rect width="1920" height="87" fill="url(#w1)"/>
    <path d="M232 0h360l38 87h-285z" fill="url(#w2)"/>
    <path d="M578 0h190l45 87h-188z" fill="url(#w3)"/>
    <path d="M762 0h490l50 87h-493z" fill="url(#w4)"/>
    <path d="M1245 0h100l-30 87h-15z" fill="#8f1c12"/>
    <path d="M1344 0h200l-80 87h-150z" fill="url(#w5)"/>
    <path d="M1543 0h377v87h-459z" fill="url(#w6)"/>
  </svg>
  <nav class="dock" aria-label="Dock">
    <button class="app run" aria-label="Finder"><svg><use href="#finder"/></svg></button>
    <button class="app" aria-label="Launchpad"><svg viewBox="0 0 44 44"><rect width="44" height="44" rx="10" fill="#c3d6ee"/><g><rect x="8" y="8" width="8" height="8" rx="2" fill="#46cf4b"/><rect x="18" y="8" width="8" height="8" rx="2" fill="#f6b92c"/><rect x="28" y="8" width="8" height="8" rx="2" fill="#f58b1e"/><rect x="8" y="18" width="8" height="8" rx="2" fill="#d32b2b"/><rect x="18" y="18" width="8" height="8" rx="2" fill="#a9b0b8"/><rect x="28" y="18" width="8" height="8" rx="2" fill="#ef3e66"/><rect x="8" y="29" width="8" height="8" rx="2" fill="#9b3ccd"/><rect x="18" y="29" width="8" height="8" rx="2" fill="#2b7de8"/><rect x="28" y="29" width="8" height="8" rx="2" fill="#2dbf9f"/></g></svg></button>
    <button class="app" aria-label="Safari"><svg viewBox="0 0 44 44"><rect width="44" height="44" rx="10" fill="#eef0f2"/><circle cx="22" cy="22" r="19" fill="url(#gStore)"/><circle cx="22" cy="22" r="16.500" fill="none" stroke="#fff" stroke-width="2.500" stroke-dasharray=".8 1.400"/><path d="M36 9l-12 16l-4-5z" fill="#f0463c"/><path d="M9 35l11-15l4 5z" fill="#fff"/></svg></button>
    <button class="app run" aria-label="Chrome"><svg viewBox="0 0 44 44"><rect width="44" height="44" rx="10" fill="#fff"/><circle cx="22" cy="22" r="19" fill="#fbc116"/><path d="M5.500 12.500a19 19 0 0 1 33 0h-16.500l-9 14z" fill="#e33b2e"/><path d="M5.500 12.500a19 19 0 0 0 15.500 28.500l9-14.500l-8 4l-8.500-5z" fill="#2da14c"/><circle cx="22" cy="22" r="9" fill="#fff"/><circle cx="22" cy="22" r="7" fill="#3a78ea"/></svg></button>
    <button class="app" aria-label="Mensajes"><svg viewBox="0 0 44 44"><rect width="44" height="44" rx="10" fill="url(#gGreen)"/><path d="M22 7c9 0 16 5.500 16 13s-7 13-16 13q-2 0-4-.5q-2 3-6 3.500q2-2 1.500-5q-7.500-4-7.500-11c0-7.500 7-13 16-13z" fill="url(#gWhite)"/></svg></button>
    <button class="app" aria-label="Mail"><svg viewBox="0 0 44 44"><rect width="44" height="44" rx="10" fill="url(#gBlue)"/><rect x="7" y="12" width="30" height="20" rx="2" fill="#f2f4f5"/><path d="M7.500 13l12 10q2.500 2 5 0l12-10M8 31l10-9M36 31l-10-9" fill="none" stroke="#9aa3aa" stroke-width="1.200"/></svg></button>
    <button class="app" aria-label="Mapas"><svg viewBox="0 0 44 44"><defs><clipPath id="mc"><rect width="44" height="44" rx="10"/></clipPath></defs><g clip-path="url(#mc)"><rect width="44" height="44" fill="#f2f2ee"/><path d="M0 0h10v15l-10 8zM24 0h20v32l-16-16z" fill="#5ace5d"/><path d="M0 26l10-6v24h-10z" fill="#f095cc"/><path d="M22 30l22 14h-22z" fill="#fbc926"/><circle cx="40" cy="5" r="11" fill="none" stroke="#d5d7da" stroke-width="5"/><path d="M12 0h9v30h-9z" fill="#1a7df0"/><path d="M28 18l16 17v-5l-16-17z" fill="#fff"/><circle cx="17" cy="28" r="10.500" fill="#1678ee" stroke="#fff" stroke-width="1.500"/><path d="M17 20l6 14l-6-4l-6 4z" fill="#fff"/></g></svg></button>
    <button class="app" aria-label="Fotos"><svg viewBox="0 0 44 44"><rect width="44" height="44" rx="10" fill="#fff"/><g opacity=".85"><rect x="17" y="3" width="10" height="18" rx="5" fill="#f89c1e"/><rect x="17" y="3" width="10" height="18" rx="5" fill="#e3d523" transform="rotate(45 22 22)"/><rect x="17" y="3" width="10" height="18" rx="5" fill="#9ccb3b" transform="rotate(90 22 22)"/><rect x="17" y="3" width="10" height="18" rx="5" fill="#4fb98c" transform="rotate(135 22 22)"/><rect x="17" y="3" width="10" height="18" rx="5" fill="#71b2e2" transform="rotate(180 22 22)"/><rect x="17" y="3" width="10" height="18" rx="5" fill="#8b7fc9" transform="rotate(225 22 22)"/><rect x="17" y="3" width="10" height="18" rx="5" fill="#c77bb8" transform="rotate(270 22 22)"/><rect x="17" y="3" width="10" height="18" rx="5" fill="#f0513c" transform="rotate(315 22 22)"/></g></svg></button>
    <button class="app" aria-label="FaceTime"><svg viewBox="0 0 44 44"><rect width="44" height="44" rx="10" fill="url(#gGreen)"/><rect x="7" y="12" width="21" height="20" rx="5" fill="url(#gWhite)"/><path d="M30 19l7-6v18l-7-6z" fill="#e8ece9"/></svg></button>
    <button class="app" aria-label="Calendario"><svg viewBox="0 0 44 44"><rect width="44" height="44" rx="10" fill="#f6f4f2"/><path d="M0 14v-4a10 10 0 0 1 10-10h24a10 10 0 0 1 10 10v4z" fill="#ee4e4b"/><text x="22" y="11" class="tNov">NOV</text><text x="22" y="36" class="tDay">3</text></svg></button>
    <button class="app" aria-label="Contactos"><svg viewBox="0 0 44 44"><path d="M38 8h6v28h-6z" fill="#7aa3c4"/><path d="M38 20h6v8h-6z" fill="#f08c1c"/><path d="M38 30h6v7h-6z" fill="#62b150"/><rect width="42" height="44" rx="10" fill="#a37c48"/><circle cx="21" cy="22" r="14" fill="#99713e" stroke="#84602f"/><circle cx="21" cy="17" r="5.500" fill="#84602f"/><path d="M11 31q10-11 20 0q-10 9-20 0z" fill="#84602f"/></svg></button>
    <button class="app" aria-label="Recordatorios"><svg viewBox="0 0 44 44"><rect width="44" height="44" rx="10" fill="#fdfdfd"/><circle cx="8.500" cy="11" r="3.500" fill="#2a7fea" stroke="#bcd6f7"/><circle cx="8.500" cy="22" r="3.500" fill="#ea4a3e" stroke="#f7c4bf"/><circle cx="8.500" cy="33" r="3.500" fill="#f2992b" stroke="#f9dcb6"/><path d="M16 11h24M16 22h24M16 33h24" stroke="#b8b8b8"/></svg></button>
    <button class="app" aria-label="Notas"><svg viewBox="0 0 44 44"><rect width="44" height="44" rx="10" fill="#f3f0ec"/><path d="M0 11v-1a10 10 0 0 1 10-10h24a10 10 0 0 1 10 10v1z" fill="#fbc80f"/><path d="M0 12h44M0 22h44M0 33h44" stroke="#cfcac4"/></svg></button>
    <button class="app" aria-label="TV"><svg viewBox="0 0 44 44"><rect width="44" height="44" rx="10" fill="#16211f"/><g transform="translate(5 14)"><path d="M9.500 0q0 3-3 3.800q0-3 3-3.800zM7 4.600q1.200-.8 3-.8q2 .2 3 1.700q-3 2.300 0 5.300q-.8 3-3 5q-1.300.2-3-.7q-1.700.9-3 .7q-3-2.600-3-7q.5-4.500 3.700-5q1 0 2.300.8z" fill="#fff"/></g><text x="29" y="29" class="tTv">tv</text></svg></button>
    <button class="app" aria-label="Música"><svg viewBox="0 0 44 44"><rect width="44" height="44" rx="10" fill="url(#gMusic)"/><path d="M17 31v-19l14-3v19M17 17l14-3" fill="none" stroke="#fff" stroke-width="3"/><ellipse cx="13.500" cy="32" rx="4.500" ry="3.800" fill="#fff"/><ellipse cx="28" cy="29" rx="4.500" ry="3.800" fill="#fff"/></svg></button>
    <button class="app" aria-label="Podcasts"><svg viewBox="0 0 44 44"><rect width="44" height="44" rx="10" fill="url(#gPod)"/><path d="M13 33a15 15 0 1 1 18 0M15.500 27a9.500 9.500 0 1 1 13 0" fill="none" stroke="#fff" stroke-width="2.200"/><circle cx="22" cy="20" r="4" fill="#fff"/><path d="M18.500 26h7l-1.500 12h-4z" fill="#fff" stroke="#fff" stroke-linejoin="round"/></svg></button>
    <button class="app" aria-label="Keynote"><svg viewBox="0 0 44 44"><rect width="44" height="44" rx="10" fill="#fcfdfe"/><path d="M3 22h38M3 33h38M12 20v22M32 20v22" stroke="#bcdcf4"/><path d="M11 5h22l2 13h-26z" fill="#2492e8"/><path d="M13 6h18l2 10h-22z" fill="#eaf5fc"/><circle cx="22" cy="11" r="4" fill="#46b254"/><path d="M22 11v-4a4 4 0 0 1 3.500 6z" fill="#ee4a3a"/><path d="M22 18v19" stroke="#777" stroke-width="2"/><path d="M15 38.500h14" stroke="#555" stroke-width="2"/></svg></button>
    <button class="app" aria-label="Numbers"><svg viewBox="0 0 44 44"><rect width="44" height="44" rx="10" fill="#fbfcf8"/><path d="M3 8h38M3 15h38M3 22h38M3 29h38M12 3v38M20 3v38M28 3v38M36 3v38" stroke="#cfe8cc"/><rect x="8" y="23" width="6" height="15" fill="#cc2f4f"/><rect x="15" y="15" width="6" height="23" fill="#ee8f22"/><rect x="22" y="6" width="7" height="32" fill="#38cf3c"/><rect x="30" y="11" width="7" height="27" fill="#2a8aea"/></svg></button>
    <button class="app" aria-label="Pages"><svg viewBox="0 0 44 44"><rect width="44" height="44" rx="10" fill="#fdfcf9"/><path d="M3 13h38M3 20h38M3 27h38M3 34h38" stroke="#ebe3d6"/><text x="3" y="26" class="tQuote">“</text><path d="M31 3l5 2l-15 26l-4-2z" fill="#efa030"/><path d="M17 29l4 2l-6 8l-2 1z" fill="#444"/></svg></button>
    <button class="app" aria-label="App Store"><svg viewBox="0 0 44 44"><rect width="44" height="44" rx="10" fill="url(#gStore)"/><path d="M25 9l-14 23M19 9l14 24M7 26h19M31 26h6" fill="none" stroke="#fff" stroke-width="3.400" stroke-linecap="round"/></svg></button>
    <button class="app" aria-label="Ajustes"><svg viewBox="0 0 44 44"><rect width="44" height="44" rx="10" fill="url(#gGrey)"/><circle cx="22" cy="22" r="18" fill="#3e4043"/><circle cx="22" cy="22" r="15" fill="none" stroke="#aaa" stroke-width="2.500" stroke-dasharray="1.500 1"/><circle cx="22" cy="22" r="12" fill="none" stroke="#9b9da0" stroke-width="2.500"/><path d="M22 22h12M22 22l-6-10.500M22 22l-6 10.500" stroke="#9b9da0" stroke-width="3"/><circle cx="22" cy="22" r="4.500" fill="#3e4043" stroke="#9b9da0" stroke-width="2"/></svg></button>
    <button class="app" aria-label="Desconocido"><svg viewBox="0 0 44 44"><path d="M10 16q-1-12 12-13q12 1 12 11q0 6-7 10q-4 3-4 9" fill="none" stroke="#f4b7a0" stroke-width="4"/><circle cx="22.500" cy="40" r="2.800" fill="#f4b7a0"/></svg></button>
    <i class="split"></i>
    <button class="app run hot" aria-label="TextEdit"><svg viewBox="0 0 44 44"><rect width="44" height="44" rx="10" fill="#fbfbfb"/><path d="M2 13h40M2 18h40M2 23h40M2 28h40M2 33h40" stroke="#ccc"/><path d="M8 2v40" stroke="#f0b9b9"/><path d="M39 -4l3 1l-20 42l-5 7l0-7z" fill="#8fa3b5" stroke="#5b6b7a" stroke-width=".800"/></svg></button>
    <button class="app run hot wacom" aria-label="Wacom"><svg viewBox="0 0 53 53"><rect width="53" height="53" fill="#151515"/><path d="M0 40h53v13h-53z" fill="#454545"/><circle cx="26.500" cy="20.500" r="15" fill="#555" stroke="#8fba1e" stroke-width="2.500"/><circle cx="26.500" cy="20.500" r="7" fill="#333" stroke="#777"/><text x="26.500" y="49" class="tWac">wacom</text></svg></button>
    <button class="app run hot" aria-label="After Effects"><svg viewBox="0 0 44 44"><rect width="44" height="44" rx="10" fill="#00005b"/><text x="22" y="31" class="tAdobe" fill="#9999ff">Ae</text></svg></button>
    <button class="app run hot" aria-label="Illustrator"><svg viewBox="0 0 44 44"><rect width="44" height="44" rx="10" fill="#330000"/><text x="22" y="31" class="tAdobe" fill="#ff9a00">Ai</text></svg></button>
    <i class="split"></i>
    <button class="app thumb" aria-label="Ventana 1"><svg viewBox="0 0 52 52"><rect x="1" y="11" width="50" height="33" fill="#fff"/><rect x="1" y="11" width="8" height="33" fill="#ece4df"/><path d="M1 12h50" stroke="#e6e0dc" stroke-width="2"/><path d="M11 15.500h13" stroke="#1c1650" stroke-width="3" stroke-dasharray="3 2"/><path d="M31 15.500h13" stroke="#6cc3f0" stroke-width="3" stroke-dasharray="3 2"/><use href="#finder" x="33" y="35" width="17" height="17"/></svg></button>
    <button class="app thumb" aria-label="Ventana 2"><svg viewBox="0 0 52 52"><rect x="1" y="9" width="50" height="37" fill="#fff"/><rect x="1" y="9" width="9" height="37" fill="#ece4df"/><path d="M1 10h50" stroke="#e6e0dc" stroke-width="2"/><path d="M12 14.500h36M12 20h3" stroke="#6cc3f0" stroke-width="3" stroke-dasharray="4 2"/><path d="M18 20h3" stroke="#1c1650" stroke-width="4"/><use href="#finder" x="33" y="35" width="17" height="17"/></svg></button>
    <button class="app thumb" aria-label="Ventana 3"><svg viewBox="0 0 52 52"><rect x="4" y="3" width="45" height="50" fill="#fff"/><rect x="4" y="3" width="12" height="50" fill="#ece4df"/><path d="M4 5h45" stroke="#e6e0dc" stroke-width="3"/><path d="M24 9v42" stroke="#a4a8ad" stroke-width="8" stroke-dasharray="1 1"/><path d="M18 9v42" stroke="#6cc3f0" stroke-dasharray="1 1"/><path d="M33 9v42M40 9v42" stroke="#d0d0d0" stroke-width="3" stroke-dasharray="1 1"/><use href="#finder" x="33" y="35" width="17" height="17"/></svg></button>
    <button class="app thumb" aria-label="Ventana 4"><svg viewBox="0 0 52 52"><rect x="1" y="8" width="50" height="40" fill="#fff"/><rect x="1" y="8" width="10" height="40" fill="#ece4df"/><path d="M13 16h30M19 29h30M13 35h30" stroke="#6d86b0" stroke-width="3" stroke-dasharray="3 3.500"/><path d="M13 22h18M13 42h20" stroke="#bb7c9c" stroke-width="3" stroke-dasharray="3 3.500"/><use href="#finder" x="33" y="35" width="17" height="17"/></svg></button>
    <button class="app thumb" aria-label="Papelera"><svg viewBox="0 0 52 52"><path d="M8 10q2-6 8-7l6-1l4 3l8-2l5 4l4 4l-17 4z" fill="#5c6560"/><path d="M12 8l5-3l4 5zM28 9l6-5l2 6z" fill="#eee"/><path d="M19 3l4 5l-5 2zM37 5l3 5h-5z" fill="#3da0a4"/><path d="M7 9q19 4 38 0l-5 40q-14 6-28 0z" fill="#e4e2e0" opacity=".96"/><path d="M14 18l6 14l-3 12M30 20l-5 14l5 10M38 20l-4 18" fill="none" stroke="#cfccca"/></svg></button>
  </nav>
</footer>
</body>
</html>
```
FILE: styles.css
```css
:root {
  --ui: "Noto Sans CJK SC", "Noto Sans", sans-serif;
  --sys: Inter, "Liberation Sans", sans-serif;
  --bg: #262626;
  --line: #161616;
  --text: #8f8f8f;
  --lit: #c8c8c8;
  --accent: #3f93d8;
}
* { box-sizing: border-box; }
html, body { margin: 0; }
body { min-height: 100vh; display: flex; flex-direction: column; font: 11px/16px var(--ui); color: var(--text); background: #2e70b0; overflow-x: hidden; }
button, input, select { font: inherit; color: inherit; background: none; border: 0; padding: 0; margin: 0; border-radius: 0; }
button { white-space: nowrap; }
svg { display: block; flex: none; overflow: visible; }
.defs { position: absolute; width: 0; height: 0; }
i, em { font-style: normal; }
em, a { color: var(--accent); text-decoration: none; }
.s10 { width: 10px; height: 10px; }
.s12 { width: 13px; height: 13px; }

/* system menu bar */
.menubar { display: flex; justify-content: space-between; height: 25px; font: 13px/24px var(--sys); color: #20221d; background: linear-gradient(90deg, #9fdbd6 0, #b0dec6 12%, #cfdf9c 23%, #e8dd84 33%, #f1d872 42%, #f4d06c 57%, #d5c98c 68%, #b9c2ac 77%, #9dbfc8 88%, #9bbcd2 100%); border-bottom: 1px solid #8c8a6c; }
.menus { display: flex; gap: 20px; }
.apple { width: 20px; margin-left: 17px; margin-right: -4px; }
.apple svg { width: 14px; height: 14px; margin: 0 auto; }
.strong { font-weight: 700; }
.status { display: flex; align-items: center; gap: 14px; padding-right: 19px; }
.status svg { width: 20px; height: 16px; }
.lang { width: 22px; height: 16px; border-radius: 3px; background: #1d1d1b; color: #d8d3b0; font: 600 11px/16px var(--sys); text-align: center; }

/* application window */
.stage { flex: 1; display: flex; padding-left: 6px; background: linear-gradient(#5f5f5f, #5f5f5f) top / 100% 120px no-repeat, repeating-linear-gradient(#8a8a8a 0 7px, #5c5c5c 7px 14px); }
.window { flex: 1; min-width: 0; display: flex; flex-direction: column; background: var(--line); border-radius: 9px 0 0 8px; overflow: hidden; }
.titlebar { display: grid; grid-template-columns: 50px 1fr 50px; align-items: center; height: 20px; background: #d6cecb; border-bottom: 1px solid #000; }
.lights { display: flex; gap: 6px; padding-left: 5px; }
.lights i { width: 9px; height: 9px; border-radius: 50%; }
.red { background: #f04f48; } .amber { background: #f5b52e; } .green { background: #2bbd3e; }
h1 { margin: 0; text-align: center; font: 11px/18px var(--sys); color: #3d3a39; white-space: nowrap; }

.toolbar { display: flex; align-items: center; height: 25px; margin: 0 0 1px 2px; background: var(--bg); }
.grip { width: 3px; height: 18px; margin: 0 5px 0 2px; background: repeating-linear-gradient(#484848 0 1px, transparent 1px 3px); }
.tool { position: relative; width: 25px; height: 22px; display: grid; place-items: center; }
.tool svg { width: 17px; height: 17px; }
.tool.more::after { content: ""; position: absolute; right: 1px; bottom: 1px; border: 2px solid; border-color: transparent #999 #999 transparent; }
.tool.on { background: #111; border-radius: 2px; color: var(--accent); font: 700 20px/22px "Liberation Serif", serif; }
.sep { width: 7px; height: 20px; background: linear-gradient(90deg, transparent 3px, #1a1a1a 3px 4px, transparent 4px); }
.sep.wide { width: 42px; background: linear-gradient(90deg, transparent 24px, #1a1a1a 24px 25px, transparent 25px); }
.auto { display: flex; align-items: center; gap: 3px; padding-left: 10px; white-space: nowrap; }
.tick { appearance: none; width: 12px; height: 12px; border: 2px solid #8f8f8f; border-radius: 2px; flex: none; }
.tick:checked { background: #8f8f8f url("data:image/svg+xml,%3Csvg xmlns='http://www.w3.org/2000/svg' viewBox='0 0 8 8'%3E%3Cpath d='M1 4l2 2.500L7 1' fill='none' stroke='%23222' stroke-width='1.600'/%3E%3C/svg%3E") center / 8px 8px no-repeat; }
.tick.big { width: 14px; height: 14px; }
.spaces { display: flex; margin-left: auto; padding-left: 23px; border-left: 1px solid #1a1a1a; height: 24px; text-align: left; }
.spaces button { text-align: left; }
.spaces .w1 { width: 123px; display: flex; align-items: center; justify-content: space-between; padding-right: 21px; color: var(--accent); }
.w1 svg { width: 10px; height: 10px; }
.w2 { width: 79px; } .w3 { width: 96px; } .w4 { width: 129px; } .w5 { width: 86px; } .w6 { width: 93px; }
.chev { width: 21px; } .chev svg { width: 13px; height: 13px; }
.sync { padding: 0 0 0 6px; height: 24px; border-left: 1px solid #1a1a1a; } .sync svg { width: 19px; height: 13px; }
.help { display: flex; align-items: center; gap: 9px; width: 193px; height: 18px; margin-left: 12px; padding-left: 6px; background: #151515; border: 1px solid #303030; border-right: 0; color: #b4b4b4; }
.help svg { width: 13px; height: 13px; }
.help input { min-width: 0; flex: 1; outline: 0; }
.help input::placeholder { color: #a8a8a8; opacity: 1; }

/* panels above the timeline */
.upper { display: grid; grid-template-columns: 390px minmax(0, 1fr) 204px; gap: 5px; padding: 0 8px 0 2px; margin-bottom: 3px; }
.panel { background: var(--bg); min-width: 0; }
.tabs { display: flex; height: 29px; }
.tab { display: flex; align-items: center; height: 26px; padding-top: 1px; color: var(--lit); white-space: nowrap; }
.tab.active { border-bottom: 2px solid #bdbdbd; }
.tab.project { padding-left: 10px; width: 92px; color: var(--text); }
.x { width: 6px; font-weight: 400; color: #999; }
.chip { width: 10px; height: 10px; flex: none; }
.chip.r { background: #b23438; } .chip.t { background: #a5967a; }
.tab .chip { margin-left: 11px; }
.lockgap { margin: 0 6px 0 8px; }
.hamgap { margin-left: 8px; color: #b0b0b0; }
.source { margin: 0; padding: 0 0 0 4px; height: 18px; border-bottom: 1px solid #000; }
.fxhead { display: flex; align-items: center; height: 18px; padding: 0 0 2px 4px; background: #222; }
.fx { font: italic 13px/14px "Liberation Serif", serif; color: #c0c0c0; width: 14px; text-align: center; }
.fxhead .fx { margin: 0 4px 0 1px; width: 16px; }
.fxhead .name { width: 163px; padding-left: 5px; color: #a0a0a0; }
.param { display: flex; align-items: center; height: 17px; margin-right: 18px; padding-left: 33px; border-bottom: 1px solid #202020; white-space: nowrap; }
.lab { width: 165px; padding-left: 3px; }
.lab.flush { width: 178px; padding-left: 0; }
.param .dd + .dd { margin-left: 2px; }
.ck { display: flex; align-items: center; gap: 3px; }
.dd { appearance: none; height: 15px; padding: 0 15px 0 6px; border: 1px solid #303030; color: #b0b0b0; line-height: 13px; white-space: nowrap; text-overflow: clip; background: #171717 url("data:image/svg+xml,%3Csvg xmlns='http://www.w3.org/2000/svg' viewBox='0 0 8 6'%3E%3Cpath d='M1 1l3 3.500L7 1' fill='none' stroke='%23aaa' stroke-width='1.200'/%3E%3C/svg%3E") right 4px center / 8px 6px no-repeat; }
.w77 { width: 77px; } .w129 { width: 129px; } .w69 { width: 69px; } .w88 { width: 88px; }

.comp { display: flex; flex-direction: column; }
.comp .tab { padding-left: 9px; }
.crumbs { display: flex; align-items: center; height: 24px; padding: 0 0 4px 27px; border-bottom: 1px solid #000; }
.crumbs svg { width: 8px; height: 10px; margin: 0 4px 0 11px; }
.crumbs button { line-height: 17px; min-width: 46px; text-align: left; }
.crumbs .cur { width: 99px; padding-left: 7px; background: #141414; border: 1px solid #2e2e2e; border-radius: 2px; color: var(--accent); line-height: 15px; }
.viewer { flex: 1; min-height: 0; display: grid; background: #222; overflow: hidden; border-bottom: 1px solid #111; }
.canvas { width: 100%; height: 100%; min-height: 0; }
.viewbar { display: flex; align-items: center; height: 24px; padding: 0 5px 2px; }
.viewbar .dd { height: 18px; color: #a8a8a8; }
.viewbar .dd + .dd { margin-left: 11px; }
.viewbar .sep { width: 10px; }
.vb { width: 22px; height: 19px; display: grid; place-items: center; border-radius: 2px; }
.vb.on { background: #161616; }
.vb svg { width: 15px; height: 15px; }
.expo { width: 35px; padding-left: 2px; }
.viewbar .time { width: 66px; height: 17px; border: 1px solid #303030; background: #171717; color: #b0b0b0; line-height: 15px; }

/* accordion on the right */
.side { display: flex; flex-direction: column; background: var(--line); }
.acc { height: 28px; margin-bottom: 2px; padding: 0 0 2px 10px; text-align: left; background: var(--bg); color: #999; }
.rest { flex: 1; min-height: 7px; background: var(--bg); }
.char { background: var(--bg); margin-bottom: 2px; padding: 0 6px 0 4px; }
.char h2 { margin: 0; padding: 0 3px 3px 6px; display: flex; justify-content: space-between; align-items: center; height: 29px; font: inherit; color: var(--lit); }
.char .s10 { color: #b0b0b0; }
.fonts { display: flex; height: 58px; padding-top: 8px; border-bottom: 2px solid #303030; }
.families { display: grid; gap: 4px; align-content: start; width: 122px; }
.split { height: 19px; color: var(--lit); border-radius: 2px; background-color: #151515; }
.dd.split { background-position: right 5px center; }
.pipette { width: 20px; height: 44px; margin: 0 6px 0 5px; }
.swatches { width: 43px; height: 42px; }
.grid { display: grid; grid-template-columns: 25px 40px 16px 20px 36px 41px 16px; grid-auto-rows: 22px; align-items: center; padding: 1px 0 5px; border-bottom: 2px solid #303030; white-space: nowrap; }
.first { grid-auto-rows: 21px; padding: 0 0 6px; }
.g1 { padding: 1px 0 4px; }
.grid svg { width: 18px; height: 18px; }
.grid b { font-size: 8px; color: #8a8a8a; text-align: center; }
.grid .c5 { grid-column: 5; margin-left: 5px; } .grid .c7 { grid-column: 6; }
.grid .off { color: #505050; }
.grid .ic { display: flex; align-items: baseline; font: 700 17px/20px "Liberation Serif", serif; color: #aaa; }
.grid .ic small { font-size: 11px; }
.grid .ic .arr { width: 6px; height: 16px; align-self: center; }
.grid .under { width: 17px; padding-left: 2px; border-bottom: 1px solid #aaa; line-height: 17px; }
.grid .base { font: 13px/16px var(--ui); text-decoration: underline; }
.grid .base sup { font-size: 9px; line-height: 10px; align-self: start; }
.grid .jp { font: 12px/14px "Noto Sans CJK JP", sans-serif; width: 16px; border: dotted #888; border-width: 0 1px; justify-content: center; }
.grid .wide { grid-column: 4 / 8; height: 18px; border-radius: 2px; }
.styles { display: flex; height: 33px; padding: 0 0 3px 20px; gap: 2px; color: #b4b4b4; }
.styles button { width: 25px; font: 15px/18px "Liberation Serif", serif; }
.styles .heavy { font-weight: 700; } .styles .ital { font-style: italic; }
.styles small { font-size: 11px; } .styles sup, .styles sub { font-size: 9px; line-height: 0; }

/* timeline */
.timeline { flex: 1; display: flex; flex-direction: column; margin-left: 1px; background: var(--bg); border: solid #2d76b3; border-width: 1px 0 2px 1px; border-radius: 0 0 0 7px; }
.ttabs { display: flex; align-items: flex-start; height: 31px; }
.ttabs > button { display: flex; align-items: center; gap: 11px; height: 25px; }
.ttabs .tab { height: 25px; padding-top: 0; }
.q { padding-left: 26px; width: 193px; }
.k2 { width: 121px; } .k3 { width: 156px; } .k4 { width: 131px; } .k5 { width: 103px; }
.k6 .chip { margin-right: 11px; }
.tbody { position: relative; flex: 1; display: grid; grid-template-columns: 790px minmax(0, 1fr); }
.layers { border-right: 1px solid #000; }
.thead { display: flex; align-items: flex-start; height: 31px; border-bottom: 1px solid #000; padding-top: 1px; }
.tc { display: flex; flex-direction: column; align-items: center; width: 100px; padding-right: 5px; color: #23618f; font-size: 10px; line-height: 12px; white-space: nowrap; }
.tc strong { font: 700 13px/15px "Noto Sans", sans-serif; color: #3a9bea; }
.tc span { font: 10px/13px Roboto, sans-serif; }
.find { display: flex; align-items: center; width: 522px; height: 20px; margin-top: 2px; padding-left: 6px; background: #151515; border: 1px solid #2e2e2e; }
.find svg { width: 18px; height: 15px; }
.find input { flex: 1; min-width: 0; outline: 0; }
.tbtns { display: flex; align-items: center; height: 24px; padding-left: 14px; }
.tbtns svg { width: 17px; height: 16px; }
.b1, .b5 { width: 22px; } .b2 { margin-left: 13px; } .b3, .b4 { margin-left: 9px; } .b5 { margin-left: 17px; }
.cols, .row { display: flex; align-items: center; white-space: nowrap; }
.cols { height: 20px; border-bottom: 1px solid #000; color: #777; font-size: 9px; }
.bar { width: 1px; height: 12px; background: #0c0c0c; flex: none; }
.av { display: flex; width: 69px; padding-left: 3px; gap: 1px; flex: none; }
.av > svg, .av > i, .sws > svg, .sws > i { width: 14px; height: 14px; flex: none; }
.av i { background: #1f1f1f; width: 14px; }
.av > i > svg { width: 14px; height: 14px; }
.av .no, .sws .no { background: none; }
.cols .av { width: 67px; }
.cols .av svg { padding: 1px; }
.cols svg { width: 14px; height: 14px; }
.tagc { margin: 0 5px 0 12px; }
.hash { width: 32px; padding-left: 6px; } .hname { width: 129px; padding-left: 5px; }
.sws { display: flex; width: 120px; gap: 1px; margin-left: 5px; flex: none; color: #6c6c6c; }
.sws i { background: #1f1f1f; }
.sws.bright { color: #b8b8b8; margin-left: 4px; }
.sws .fx { width: 14px; line-height: 13px; }
.far { margin-left: 72px; }
.hmate { width: 197px; text-align: center; padding-left: 4px; } .hpar { width: 116px; padding-left: 5px; }
.row { height: 17px; border-bottom: 1px solid #1e1e1e; }
.layer { background: #2e2e2e; font-weight: 500; }
.layer.sel { background: #444; }
.layer.sel i:not(.no):not(.sw) { background: #383838; }
.tw { width: 10px; height: 10px; margin: 0 3px 0 2px; }
.sw { width: 12px; height: 12px; flex: none; }
.sw.blue { background: #6a7ad8; } .sw.red { background: #b23438; }
.num { width: 31px; text-align: center; padding-right: 7px; flex: none; }
.ty { width: 23px; text-align: center; font: 15px/16px "Liberation Serif", serif; color: #b8b8b8; flex: none; }
svg.ty { height: 12px; }
.row .name { width: 111px; padding-left: 3px; color: #9a9a9a; flex: none; }
.sel .name { background: #9e9e9e; color: #1c1c1c; }
.row .dd { border-color: #262626; font-weight: 400; height: 15px; }
.mode { width: 61px; margin-left: 76px; flex: none; }
.pt { width: 13px; height: 13px; margin: 0 3px 0 5px; background: #222; flex: none; }
.wh { width: 13px; height: 13px; margin-left: 2px; margin-right: 4px; }
.matte { width: 61px; flex: none; }
.row .matte { padding-right: 12px; }
.wh2 { width: 13px; height: 13px; margin: 0 6px 0 37px; }
.parent { width: 89px; flex: none; }
.prop { background: var(--bg); }
.in1 { margin-left: 89px; margin-right: 7px; } .in2 { margin-left: 35px; margin-right: 9px; }
.agregar { display: flex; align-items: center; gap: 3px; margin-left: auto; padding-right: 335px; }
.agregar svg { width: 12px; height: 12px; }
.rect { width: 145px; } .trans { width: 161px; }
.blend { width: 187px; }
.tw.pos { width: 13px; height: 13px; margin: 0 6px 0 120px; }
.posn { width: 128px; }
.anchor { position: relative; flex: none; }
.popup { position: absolute; z-index: 5; left: 0; top: 14px; width: 199px; margin: 0; padding: 6px 0; list-style: none; background: #c3bdb9; border-radius: 6px; box-shadow: 0 4px 14px #0007; font: 400 13px/22px var(--sys); color: #1e1c1b; }
.popup li { padding-left: 33px; height: 22px; }
.popup .chosen::before { content: ""; float: left; width: 7px; height: 7px; margin: 8px 0 0 -18px; border-radius: 50%; background: #1e1c1b; }
.popup .rule { height: 1px; margin: 4px 14px 6px; padding: 0; background: #a39d9a; }
.popup .off { color: #8a8583; }

.tracks { position: relative; background: #333; border-right: 13px solid #222; overflow: hidden; }
.range { display: flex; background: #222; }
.range i { width: 7px; background: #2d8ceb; border-radius: 5px 0 0 5px; flex: none; }
.range i:last-child { border-radius: 0 5px 5px 0; }
.range b { flex: 1; background: #636363; border: solid #000; border-width: 0 1px; }
.nav { height: 10px; border-top: 1px solid #000; border-bottom: 1px solid #000; }
.ruler { display: grid; grid-template-columns: 39px repeat(17, 1fr); height: 20px; margin-right: -6px; background: var(--bg); text-align: center; }
.ruler span { line-height: 16px; background: linear-gradient(#777, #777) center bottom / 1px 5px no-repeat; }
.ruler .zero { background: none; text-align: left; }
.work { height: 21px; border-top: 1px solid #000; border-bottom: 1px solid #000; }
.work i { height: 16px; }
.work b { border-bottom: 3px solid #1fb62d; background: #5e5e5e; }
.lane { height: 17px; display: flex; padding: 0 7px; border-bottom: 1px solid #1e1e1e; }
.lane.sel { background: #444; }
.lane svg { width: 10px; height: 16px; margin-left: -5px; }
.clip { flex: 1; background: #7b3a3b; }
.clip.blue { background: #525c94; }
.clip.hot { background: linear-gradient(#b64a4b, #9a4041); border-top: 1px solid #d58a88; }
.clip.late { margin-left: 16px; }
.needle { position: absolute; left: 7px; top: 20px; bottom: 0; width: 1px; background: #3a8fe0; }
.head { position: absolute; left: 1px; top: 14px; width: 12px; height: 14px; }
.marks { position: absolute; right: 0; top: 31px; width: 8px; height: 36px; }
.foot { display: flex; align-items: center; height: 17px; background: #222; border-top: 1px solid #000; }
.ficons { display: flex; gap: 6px; padding-left: 5px; width: 104px; }
.ficons svg { width: 13px; height: 13px; }
.cost { width: 686px; white-space: nowrap; }
.cost b { font-weight: 400; color: #7cc8a4; }
.zoomer { display: flex; align-items: center; gap: 10px; padding-left: 5px; }
.zoomer svg { width: 10px; height: 7px; } .zoomer .mt { width: 16px; height: 9px; }
.zoomer input { appearance: none; width: 50px; height: 2px; background: #4a4a4a; outline: 0; }
.zoomer input::-webkit-slider-thumb { appearance: none; width: 10px; height: 10px; border: 2px solid #8a8a8a; border-radius: 50%; background: #222; }

/* desktop and dock */
.desk { position: relative; padding: 14px 49px 5px 48px; }
.wall { position: absolute; inset: 0; width: 100%; height: 100%; }
.dock { position: relative; display: flex; justify-content: center; height: 68px; border-radius: 17px; box-shadow: inset 0 0 0 1px #ffffff40; background: linear-gradient(100deg, #5f9bdc 0, #66a9e8 11%, #84a5c8 15%, #e89a68 18%, #ff9450 21%, #ffad50 28%, #ff8450 33%, #ff8050 36%, #ffa84e 44%, #ff8850 51%, #ff7050 60%, #ff7550 68%, #ff9450 74%, #ffa050 80%, #ff9a52 88%, #ff8450 100%); }
.app { position: relative; flex: 0 1 57px; min-width: 0; padding: 10px 0 15px; }
.app svg { width: 43px; height: 43px; margin: 0 auto; }
.app.wacom { padding: 5px 0 10px; } .app.wacom svg { width: 53px; height: 53px; }
.app.thumb { padding: 5px 0 12px; } .app.thumb svg { width: 51px; height: 51px; }
.app.run::after { content: ""; position: absolute; left: 50%; bottom: 3px; width: 4px; height: 4px; margin-left: -2px; border-radius: 50%; background: #12305e; }
.app.hot::after { background: #7a2408; }
.split { flex: none; }
i.split { width: 25px; height: 50px; margin-top: 9px; background: linear-gradient(90deg, transparent 12px, #c4622c 12px 13px, transparent 13px); border-radius: 0; }
.tNov { font: 600 9px Inter, sans-serif; fill: #fff; text-anchor: middle; }
.tDay { font: 300 24px Inter, sans-serif; fill: #333; text-anchor: middle; }
.tTv { font: 500 16px Inter, sans-serif; fill: #fff; text-anchor: middle; }
.tQuote { font: 700 28px "Liberation Serif", serif; fill: #e9a23a; }
.tWac { font: 9px Inter, sans-serif; fill: #999; text-anchor: middle; }
.tAdobe { font: 600 24px "Noto Sans", sans-serif; text-anchor: middle; }
```
